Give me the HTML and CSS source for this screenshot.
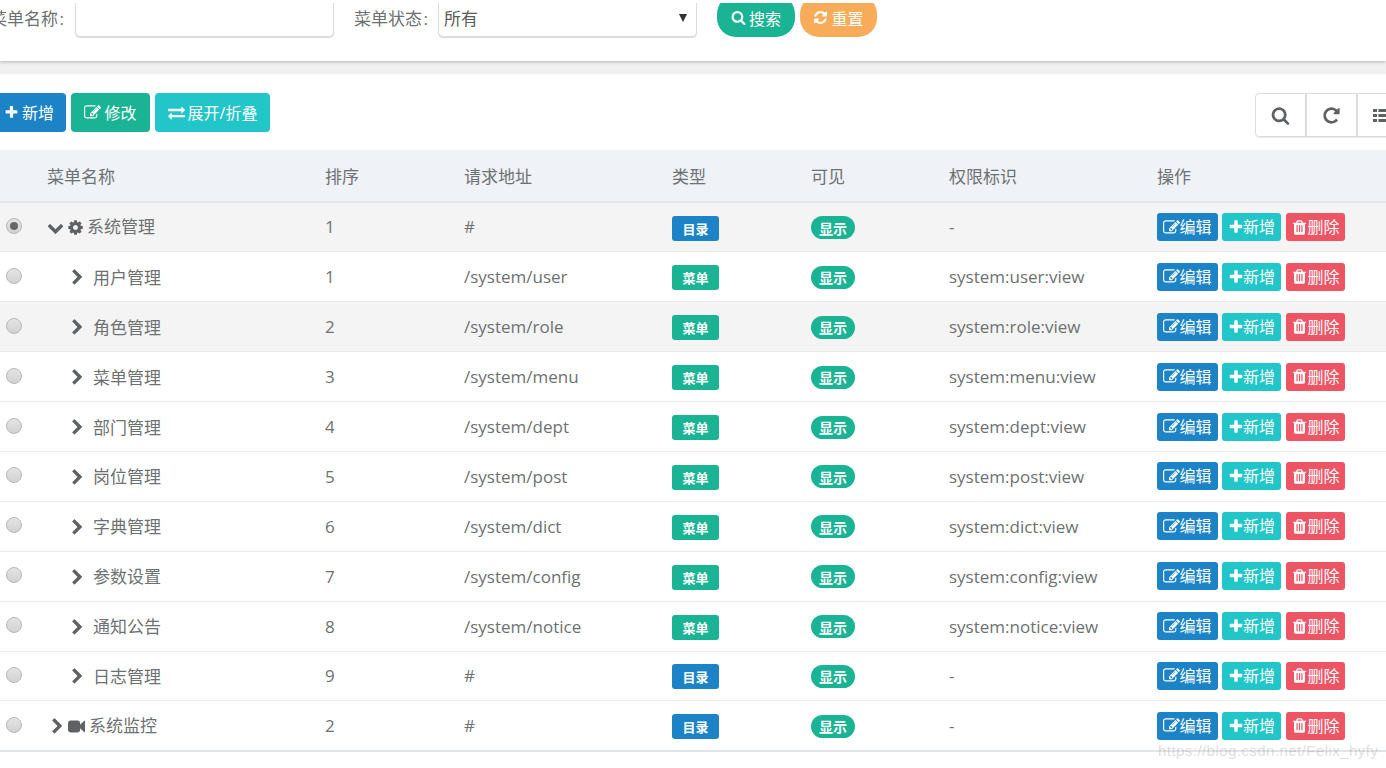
FILE: index.html
```html
<!DOCTYPE html>
<html lang="zh">
<head>
<meta charset="utf-8">
<title>菜单管理</title>
<link rel="stylesheet" href="styles.css">
</head>
<body>
<svg class="sprite" xmlns="http://www.w3.org/2000/svg">
<defs>
<symbol id="i-plus" viewBox="0 0 1792 1792"><path d="M1600 736v192q0 40-28 68t-68 28h-416v416q0 40-28 68t-68 28h-192q-40 0-68-28t-28-68v-416h-416q-40 0-68-28t-28-68v-192q0-40 28-68t68-28h416v-416q0-40 28-68t68-28h192q40 0 68 28t28 68v416h416q40 0 68 28t28 68z"/></symbol>
<symbol id="i-search" viewBox="0 0 1792 1792"><path d="M1216 832q0-185-131.500-316.500t-316.500-131.500-316.500 131.500-131.500 316.500 131.500 316.500 316.500 131.500 316.500-131.500 131.500-316.500zm512 832q0 52-38 90t-90 38q-54 0-90-38l-343-342q-179 124-399 124-143 0-273.500-55.500t-225-150-150-225-55.500-273.500 55.500-273.500 150-225 225-150 273.500-55.500 273.500 55.500 225 150 150 225 55.500 273.500q0 220-124 399l343 343q37 37 37 90z"/></symbol>
<symbol id="i-right" viewBox="0 0 1792 1792"><path d="M1363 877l-742 742q-19 19-45 19t-45-19l-166-166q-19-19-19-45t19-45l531-531-531-531q-19-19-19-45t19-45l166-166q19-19 45-19t45 19l742 742q19 19 19 45t-19 45z"/></symbol>
<symbol id="i-down" viewBox="0 0 1792 1792"><path d="M1683 808l-742 741q-19 19-45 19t-45-19l-742-741q-19-19-19-45.500t19-45.500l166-165q19-19 45-19t45 19l531 531 531-531q19-19 45-19t45 19l166 165q19 19 19 45.500t-19 45.500z"/></symbol>
<symbol id="i-trash" viewBox="0 0 1792 1792"><path d="M704 1376v-704q0-14-9-23t-23-9h-64q-14 0-23 9t-9 23v704q0 14 9 23t23 9h64q14 0 23-9t9-23zm256 0v-704q0-14-9-23t-23-9h-64q-14 0-23 9t-9 23v704q0 14 9 23t23 9h64q14 0 23-9t9-23zm256 0v-704q0-14-9-23t-23-9h-64q-14 0-23 9t-9 23v704q0 14 9 23t23 9h64q14 0 23-9t9-23zm-544-992h448l-48-117q-7-9-17-11h-317q-10 2-17 11zm928 32v64q0 14-9 23t-23 9h-96v948q0 83-47 143.500t-113 60.500h-832q-66 0-113-58.500t-47-141.500v-952h-96q-14 0-23-9t-9-23v-64q0-14 9-23t23-9h309l70-167q15-37 54-63t79-26h320q40 0 79 26t54 63l70 167h309q14 0 23 9t9 23z"/></symbol>
<symbol id="i-cog" viewBox="0 0 1792 1792"><path d="M1152 896q0-106-75-181t-181-75-181 75-75 181 75 181 181 75 181-75 75-181zm512-109v222q0 12-8 23t-20 13l-185 28q-19 54-39 91 35 50 107 138 10 12 10 25t-9 23q-27 37-99 108t-94 71q-12 0-26-9l-138-108q-44 23-91 38-16 136-29 186-7 28-36 28h-222q-14 0-24.500-8.500t-11.500-21.500l-28-184q-49-16-90-37l-141 107q-10 9-25 9-14 0-25-11-126-114-165-168-7-10-7-23 0-12 8-23 15-21 51-66.500t54-70.500q-27-50-41-99l-183-27q-13-2-21-12.500t-8-23.500v-222q0-12 8-23t19-13l186-28q14-46 39-92-40-57-107-138-10-12-10-24 0-10 9-23 26-36 98.500-107.500t94.500-71.500q13 0 26 10l138 107q44-23 91-38 16-136 29-186 7-28 36-28h222q14 0 24.500 8.500t11.500 21.500l28 184q49 16 90 37l142-107q9-9 24-9 13 0 25 10 129 119 165 170 7 8 7 22 0 12-8 23-15 21-51 66.500t-54 70.500q26 50 41 98l183 28q13 2 21 12.500t8 23.500z"/></symbol>
<symbol id="i-edit" viewBox="0 0 1792 1792"><path d="M888 1184l116-116-152-152-116 116v56h96v96h56zm440-720q-16-16-33 1l-350 350q-17 17-1 33t33-1l350-350q17-17 1-33zm80 594v190q0 119-84.500 203.500t-203.500 84.500h-832q-119 0-203.500-84.500t-84.500-203.500v-832q0-119 84.500-203.500t203.500-84.500h832q63 0 117 25 15 7 18 23 3 17-9 29l-49 49q-14 14-32 8-23-6-45-6h-832q-66 0-113 47t-47 113v832q0 66 47 113t113 47h832q66 0 113-47t47-113v-126q0-13 9-22l64-64q15-15 35-7t20 29zm-96-738l288 288-672 672h-288v-288zm444 132l-92 92-288-288 92-92q28-28 68-28t68 28l152 152q28 28 28 68t-28 68z"/></symbol>
<symbol id="i-refresh" viewBox="0 0 1792 1792"><path d="M1639 1056q0 5-1 7-64 268-268 434.500t-478 166.500q-146 0-282.500-55t-243.500-157l-129 129q-19 19-45 19t-45-19-19-45v-448q0-26 19-45t45-19h448q26 0 45 19t19 45-19 45l-137 137q71 66 161 102t187 36q134 0 250-65t186-179q11-17 53-117 8-23 30-23h192q13 0 22.500 9.500t9.500 22.500zm25-800v448q0 26-19 45t-45 19h-448q-26 0-45-19t-19-45 19-45l138-138q-148-137-349-137-134 0-250 65t-186 179q-11 17-53 117-8 23-30 23h-199q-13 0-22.500-9.500t-9.500-22.500v-7q65-268 270-434.500t480-166.500q146 0 284 55.500t245 156.500l130-129q19-19 45-19t45 19 19 45z"/></symbol>
<symbol id="i-repeat" viewBox="0 0 1792 1792"><path d="M1664 256v448q0 26-19 45t-45 19h-448q-42 0-59-40-17-39 14-69l138-138q-148-137-349-137-104 0-198.500 40.500t-163.500 109.500-109.500 163.500-40.500 198.500 40.500 198.500 109.500 163.500 163.500 109.500 198.500 40.500q119 0 225-52t179-147q7-10 23-12 15 0 25 9l137 138q9 8 9.500 20.500t-7.500 22.500q-109 132-264 204.500t-327 72.500q-156 0-298-61t-245-164-164-245-61-298 61-298 164-245 245-164 298-61q147 0 284.500 55.500t244.500 156.500l130-129q29-31 70-14 39 17 39 59z"/></symbol>
<symbol id="i-exchange" viewBox="0 0 1792 1792"><path d="M1792 1184v192q0 13-9.500 22.500t-22.500 9.500h-1376v192q0 13-9.500 22.500t-22.500 9.500q-12 0-24-10l-319-320q-9-9-9-22 0-14 9-23l320-320q9-9 23-9 13 0 22.500 9.500t9.500 22.500v192h1376q13 0 22.500 9.500t9.500 22.500zm0-544q0 14-9 23l-320 320q-9 9-23 9-13 0-22.500-9.500t-9.500-22.500v-192h-1376q-13 0-22.500-9.500t-9.500-22.500v-192q0-13 9.500-22.500t22.500-9.500h1376v-192q0-14 9-23t23-9q12 0 24 10l319 319q9 9 9 23z"/></symbol>
<symbol id="i-video" viewBox="0 0 1792 1792"><path d="M1792 352v1088q0 42-39 59-13 5-25 5-27 0-45-19l-403-403v166q0 119-84.500 203.500t-203.500 84.500h-704q-119 0-203.500-84.500t-84.500-203.500v-704q0-119 84.500-203.500t203.500-84.500h704q119 0 203.500 84.500t84.500 203.500v165l403-402q18-19 45-19 12 0 25 5 39 17 39 59z"/></symbol>
<symbol id="i-list" viewBox="0 0 1792 1792"><path d="M0 288h384v288h-384zM512 288h1280v288h-1280zM0 752h384v288h-384zM512 752h1280v288h-1280zM0 1216h384v288h-384zM512 1216h1280v288h-1280z"/></symbol>
</defs>
</svg>

<div class="page">
  <section class="search-panel">
    <div class="search-row">
      <label class="field-label label-first">菜单名称<span class="colon">:</span></label>
      <div class="control control-input"></div>
      <label class="field-label label-second">菜单状态<span class="colon">:</span></label>
      <div class="control control-select"><span>所有</span><i class="caret"></i></div>
      <button class="pill pill-green"><svg class="ic ic-15"><use href="#i-search"/></svg>搜索</button>
      <button class="pill pill-orange"><svg class="ic ic-15"><use href="#i-refresh"/></svg>重置</button>
    </div>
  </section>

  <section class="table-panel">
    <div class="toolbar">
      <div class="tool-left">
        <button class="btn bg-blue btn-new"><svg class="ic ic-15"><use href="#i-plus"/></svg>新增</button>
        <button class="btn bg-green btn-edit"><svg class="ic ic-17"><use href="#i-edit"/></svg>修改</button>
        <button class="btn bg-cyan btn-fold"><svg class="ic ic-17"><use href="#i-exchange"/></svg>展开/折叠</button>
      </div>
      <div class="tool-right">
        <span class="tool"><svg class="ic ic-19"><use href="#i-search"/></svg></span>
        <span class="tool"><svg class="ic ic-19"><use href="#i-repeat"/></svg></span>
        <span class="tool"><svg class="ic ic-19"><use href="#i-list"/></svg></span>
      </div>
    </div>

    <table class="tree">
      <thead>
        <tr><th class="c-radio"></th><th class="c-name">菜单名称</th><th class="c-sort">排序</th><th class="c-url">请求地址</th><th class="c-type">类型</th><th class="c-vis">可见</th><th class="c-perm">权限标识</th><th class="c-act">操作</th></tr>
      </thead>
      <tbody>
        <tr class="shade">
          <td><span class="radio checked"></span></td>
          <td><span class="node root"><svg class="ic arrow-down"><use href="#i-down"/></svg><svg class="ic ic-17 node-ic"><use href="#i-cog"/></svg>系统管理</span></td>
          <td>1</td><td>#</td><td><span class="tag bg-blue">目录</span></td><td><span class="show">显示</span></td><td>-</td>
          <td><div class="ops"><a class="op bg-blue op-edit"><svg class="ic"><use href="#i-edit"/></svg>编辑</a><a class="op bg-cyan op-add"><svg class="ic"><use href="#i-plus"/></svg>新增</a><a class="op bg-red op-del"><svg class="ic"><use href="#i-trash"/></svg>删除</a></div></td>
        </tr>
        <tr>
          <td><span class="radio"></span></td>
          <td><span class="node child"><svg class="ic arrow-right"><use href="#i-right"/></svg>用户管理</span></td>
          <td>1</td><td>/system/user</td><td><span class="tag bg-green">菜单</span></td><td><span class="show">显示</span></td><td>system:user:view</td>
          <td><div class="ops"><a class="op bg-blue op-edit"><svg class="ic"><use href="#i-edit"/></svg>编辑</a><a class="op bg-cyan op-add"><svg class="ic"><use href="#i-plus"/></svg>新增</a><a class="op bg-red op-del"><svg class="ic"><use href="#i-trash"/></svg>删除</a></div></td>
        </tr>
        <tr class="shade">
          <td><span class="radio"></span></td>
          <td><span class="node child"><svg class="ic arrow-right"><use href="#i-right"/></svg>角色管理</span></td>
          <td>2</td><td>/system/role</td><td><span class="tag bg-green">菜单</span></td><td><span class="show">显示</span></td><td>system:role:view</td>
          <td><div class="ops"><a class="op bg-blue op-edit"><svg class="ic"><use href="#i-edit"/></svg>编辑</a><a class="op bg-cyan op-add"><svg class="ic"><use href="#i-plus"/></svg>新增</a><a class="op bg-red op-del"><svg class="ic"><use href="#i-trash"/></svg>删除</a></div></td>
        </tr>
        <tr>
          <td><span class="radio"></span></td>
          <td><span class="node child"><svg class="ic arrow-right"><use href="#i-right"/></svg>菜单管理</span></td>
          <td>3</td><td>/system/menu</td><td><span class="tag bg-green">菜单</span></td><td><span class="show">显示</span></td><td>system:menu:view</td>
          <td><div class="ops"><a class="op bg-blue op-edit"><svg class="ic"><use href="#i-edit"/></svg>编辑</a><a class="op bg-cyan op-add"><svg class="ic"><use href="#i-plus"/></svg>新增</a><a class="op bg-red op-del"><svg class="ic"><use href="#i-trash"/></svg>删除</a></div></td>
        </tr>
        <tr>
          <td><span class="radio"></span></td>
          <td><span class="node child"><svg class="ic arrow-right"><use href="#i-right"/></svg>部门管理</span></td>
          <td>4</td><td>/system/dept</td><td><span class="tag bg-green">菜单</span></td><td><span class="show">显示</span></td><td>system:dept:view</td>
          <td><div class="ops"><a class="op bg-blue op-edit"><svg class="ic"><use href="#i-edit"/></svg>编辑</a><a class="op bg-cyan op-add"><svg class="ic"><use href="#i-plus"/></svg>新增</a><a class="op bg-red op-del"><svg class="ic"><use href="#i-trash"/></svg>删除</a></div></td>
        </tr>
        <tr>
          <td><span class="radio"></span></td>
          <td><span class="node child"><svg class="ic arrow-right"><use href="#i-right"/></svg>岗位管理</span></td>
          <td>5</td><td>/system/post</td><td><span class="tag bg-green">菜单</span></td><td><span class="show">显示</span></td><td>system:post:view</td>
          <td><div class="ops"><a class="op bg-blue op-edit"><svg class="ic"><use href="#i-edit"/></svg>编辑</a><a class="op bg-cyan op-add"><svg class="ic"><use href="#i-plus"/></svg>新增</a><a class="op bg-red op-del"><svg class="ic"><use href="#i-trash"/></svg>删除</a></div></td>
        </tr>
        <tr>
          <td><span class="radio"></span></td>
          <td><span class="node child"><svg class="ic arrow-right"><use href="#i-right"/></svg>字典管理</span></td>
          <td>6</td><td>/system/dict</td><td><span class="tag bg-green">菜单</span></td><td><span class="show">显示</span></td><td>system:dict:view</td>
          <td><div class="ops"><a class="op bg-blue op-edit"><svg class="ic"><use href="#i-edit"/></svg>编辑</a><a class="op bg-cyan op-add"><svg class="ic"><use href="#i-plus"/></svg>新增</a><a class="op bg-red op-del"><svg class="ic"><use href="#i-trash"/></svg>删除</a></div></td>
        </tr>
        <tr>
          <td><span class="radio"></span></td>
          <td><span class="node child"><svg class="ic arrow-right"><use href="#i-right"/></svg>参数设置</span></td>
          <td>7</td><td>/system/config</td><td><span class="tag bg-green">菜单</span></td><td><span class="show">显示</span></td><td>system:config:view</td>
          <td><div class="ops"><a class="op bg-blue op-edit"><svg class="ic"><use href="#i-edit"/></svg>编辑</a><a class="op bg-cyan op-add"><svg class="ic"><use href="#i-plus"/></svg>新增</a><a class="op bg-red op-del"><svg class="ic"><use href="#i-trash"/></svg>删除</a></div></td>
        </tr>
        <tr>
          <td><span class="radio"></span></td>
          <td><span class="node child"><svg class="ic arrow-right"><use href="#i-right"/></svg>通知公告</span></td>
          <td>8</td><td>/system/notice</td><td><span class="tag bg-green">菜单</span></td><td><span class="show">显示</span></td><td>system:notice:view</td>
          <td><div class="ops"><a class="op bg-blue op-edit"><svg class="ic"><use href="#i-edit"/></svg>编辑</a><a class="op bg-cyan op-add"><svg class="ic"><use href="#i-plus"/></svg>新增</a><a class="op bg-red op-del"><svg class="ic"><use href="#i-trash"/></svg>删除</a></div></td>
        </tr>
        <tr>
          <td><span class="radio"></span></td>
          <td><span class="node child"><svg class="ic arrow-right"><use href="#i-right"/></svg>日志管理</span></td>
          <td>9</td><td>#</td><td><span class="tag bg-blue">目录</span></td><td><span class="show">显示</span></td><td>-</td>
          <td><div class="ops"><a class="op bg-blue op-edit"><svg class="ic"><use href="#i-edit"/></svg>编辑</a><a class="op bg-cyan op-add"><svg class="ic"><use href="#i-plus"/></svg>新增</a><a class="op bg-red op-del"><svg class="ic"><use href="#i-trash"/></svg>删除</a></div></td>
        </tr>
        <tr>
          <td><span class="radio"></span></td>
          <td><span class="node closed"><svg class="ic arrow-right"><use href="#i-right"/></svg><svg class="ic ic-17 node-ic"><use href="#i-video"/></svg>系统监控</span></td>
          <td>2</td><td>#</td><td><span class="tag bg-blue">目录</span></td><td><span class="show">显示</span></td><td>-</td>
          <td><div class="ops"><a class="op bg-blue op-edit"><svg class="ic"><use href="#i-edit"/></svg>编辑</a><a class="op bg-cyan op-add"><svg class="ic"><use href="#i-plus"/></svg>新增</a><a class="op bg-red op-del"><svg class="ic"><use href="#i-trash"/></svg>删除</a></div></td>
        </tr>
      </tbody>
    </table>
  </section>
</div>
<div class="watermark">https://blog.csdn.net/Felix_hyfy</div>
</body>
</html>
```

FILE: styles.css
```css
* { box-sizing: border-box; }
html, body { margin: 0; height: 768px; overflow: hidden; background: #fff; }
body {
  font-family: "Open Sans", "Noto Sans CJK SC", sans-serif;
  font-size: 17px;
  color: #6e7173;
  position: relative;
}
.sprite { display: none; }
.page { width: 1386px; height: 768px; background: #f0f0f0; overflow: hidden; }
.ic { fill: currentColor; flex: none; display: block; }
.ic-15 { width: 15px; height: 15px; }
.ic-17 { width: 17px; height: 17px; }
.ic-19 { width: 19px; height: 19px; }

.bg-blue { background: #1c84c6; }
.bg-green { background: #1ab394; }
.bg-cyan { background: #23c6c8; }
.bg-red { background: #ed5565; }

/* search */
.search-panel {
  height: 61px;
  background: #fff;
  box-shadow: 0 1px 3px rgba(0,0,0,.25);
  padding-top: 3px;
  position: relative;
}
.search-row {
  height: 36px;
  overflow: hidden;
  display: flex;
  align-items: flex-end;
  padding-bottom: 2px;
  margin-left: -10px;
}
.search-row > * { flex: none; }
.field-label { line-height: 34px; height: 34px; margin-bottom: 1px; }
.colon { margin-left: 1.5px; }
.label-first { width: 85px; }
.label-second { width: 84px; margin-left: 20px; }
.control {
  height: 40px;
  background: #fff;
  border: 1px solid #ddd;
  border-radius: 5px;
  box-shadow: 0 1px 1px rgba(0,0,0,.15);
}
.control-input { width: 259px; }
.control-select {
  width: 259px;
  display: flex;
  align-items: flex-end;
  justify-content: space-between;
  padding: 0 9px 5px 5px;
  line-height: 24px;
  color: #5c5c5c;
}
.caret {
  width: 0; height: 0;
  border-left: 4px solid transparent;
  border-right: 4px solid transparent;
  border-top: 8px solid #333;
  margin-bottom: 9px;
}
.pill {
  height: 42px;
  border: 0;
  border-radius: 19px;
  color: #fff;
  font: inherit;
  font-size: 16px;
  display: flex;
  align-items: center;
  justify-content: center;
  gap: 3px;
  padding: 3px 0 0;
}
.pill-green { width: 78px; background: #1ab394; margin-left: 20px; }
.pill-orange { width: 77px; background: #f8ac59; margin-left: 5px; }

/* panel */
.table-panel {
  margin-top: 13px;
  height: 694px;
  background: #fff;
  overflow: hidden;
}
.toolbar {
  display: flex;
  justify-content: space-between;
  align-items: flex-start;
  height: 76px;
  padding-top: 19px;
}
.tool-left { display: flex; gap: 5px; margin-left: -8px; }
.btn {
  height: 39px;
  border: 0;
  border-radius: 4px;
  color: #fff;
  font: inherit;
  font-size: 16px;
  display: flex;
  align-items: center;
  justify-content: center;
  gap: 3px;
  padding: 0 0 1px;
}
.btn-new { width: 74px; }
.btn-edit { width: 79px; }
.btn-fold { width: 115px; }
.tool-right {
  display: flex;
  height: 44px;
  margin-right: -23px;
  border: 1px solid #ddd;
  border-radius: 4px;
  box-shadow: 0 1px 1px rgba(0,0,0,.08);
}
.tool {
  width: 51px;
  display: flex;
  align-items: center;
  justify-content: center;
  color: #5f6265;
  border-right: 2px solid #ddd;
}
.tool:last-child { border-right: 0; width: 50px; justify-content: flex-start; padding-left: 15px; }

/* table */
.tree {
  width: 1386px;
  border-collapse: collapse;
  table-layout: fixed;
}
.tree th {
  height: 52px;
  padding: 0;
  background: #eff2f7;
  font-weight: 400;
  text-align: left;
  border-bottom: 2px solid #e4e6e9;
}
.tree td {
  height: 49.9px;
  padding: 0;
  border-bottom: 1px solid #e9eaec;
  vertical-align: middle;
}
.tree tbody tr:last-child td { border-bottom: 2px solid #e2e5e8; }
.tree tbody tr:first-child td:nth-child(3),
.tree tbody tr:first-child td:nth-child(4),
.tree tbody tr:first-child td:nth-child(7) { padding-bottom: 2px; }
.shade td { background: #f4f4f4; }
.c-radio { width: 47px; }
.c-name { width: 278px; }
.c-sort { width: 139px; }
.c-url { width: 208px; }
.c-type { width: 139px; }
.c-vis { width: 138px; }
.c-perm { width: 208px; }
.c-act { width: 229px; }

.radio {
  display: block;
  width: 16px;
  height: 16px;
  margin: -2px 0 0 6px;
  border-radius: 50%;
  border: 1px solid #b8b8b8;
  background: linear-gradient(#e4e4e4, #d2d2d2);
  position: relative;
}
.radio.checked::after {
  content: "";
  position: absolute;
  left: 3px;
  top: 3px;
  width: 8px;
  height: 8px;
  border-radius: 50%;
  background: #666;
}
.node { display: flex; align-items: center; line-height: 24px; }
.arrow-down { width: 17px; height: 17px; margin-right: 3px; color: #5f6265; }
.arrow-right { width: 17px; height: 17px; color: #5f6265; }
.node-ic { color: #5f6265; }
.root .node-ic { margin-right: 3px; }
.child { padding: 2px 0 0 22px; }
.child .arrow-right { margin-right: 7px; }
.closed { padding: 1px 0 0 1.5px; }
.closed .arrow-right { margin-right: 2.5px; }
.closed .node-ic { margin-right: 4px; }

.tag {
  display: flex;
  align-items: center;
  justify-content: center;
  width: 47px;
  height: 25px;
  margin-top: 2px;
  border-radius: 3px;
  color: #fff;
  font-size: 13px;
  font-weight: 700;
}
.show {
  display: flex;
  align-items: center;
  justify-content: center;
  width: 44px;
  height: 23px;
  margin-top: 1px;
  border-radius: 12px;
  background: #1ab394;
  color: #fff;
  font-size: 14px;
  font-weight: 700;
}
.ops { display: flex; gap: 4px; }
.op {
  display: flex;
  align-items: center;
  justify-content: center;
  height: 28px;
  border-radius: 3px;
  color: #fff;
  font-size: 16px;
  line-height: 28px;
}
.op .ic { width: 17px; height: 17px; margin-right: -1px; }
.op-add .ic { width: 16px; height: 16px; }
.op-edit { width: 61px; }
.op-add { width: 59px; }
.op-del { width: 59px; margin-left: 1px; }

.watermark {
  position: absolute;
  left: 1158px;
  top: 742px;
  font-family: "Liberation Sans", sans-serif;
  font-size: 15px;
  letter-spacing: .45px;
  color: rgba(120,120,120,.25);
  white-space: nowrap;
}
```
